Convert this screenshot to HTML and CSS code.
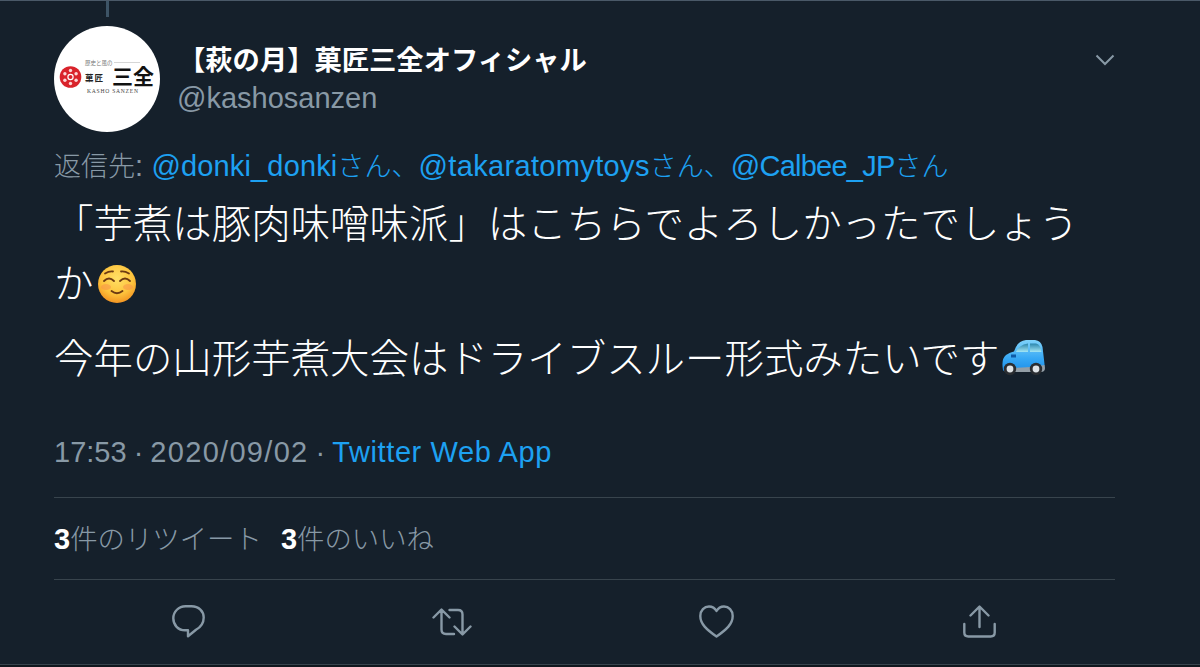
FILE: index.html
```html
<!DOCTYPE html>
<html lang="ja">
<head>
<meta charset="utf-8">
<title>Tweet</title>
<link rel="stylesheet" href="styles.css">
</head>
<body>
<main class="tweet">
  <div class="thread-stub"></div>
  <header class="head">
    <div class="avatar">
      <svg class="logo" viewBox="0 0 106 106" width="106" height="106">
        <circle cx="53" cy="53" r="53" fill="#fff"/>
        <text class="logo-top" x="31" y="38.500">歴史と風の</text>
        <line x1="60" y1="36.500" x2="86" y2="36.500" stroke="#c4c4c4" stroke-width=".7"/>
        <circle cx="16.500" cy="51" r="10.800" fill="#d9232b"/>
        <g fill="#fbd7d7">
          <circle cx="16.500" cy="44.500" r="1.700"/><circle cx="22.100" cy="47.700" r="1.700"/><circle cx="22.100" cy="54.300" r="1.700"/>
          <circle cx="16.500" cy="57.500" r="1.700"/><circle cx="10.900" cy="54.300" r="1.700"/><circle cx="10.900" cy="47.700" r="1.700"/>
        </g>
        <circle cx="16.500" cy="51" r="2.600" fill="none" stroke="#fff" stroke-width="1.200"/>
        <text class="logo-mid" x="31" y="55">菓匠</text>
        <text class="logo-big" x="58" y="58">三全</text>
        <text class="logo-en" x="33" y="67">KASHO SANZEN</text>
      </svg>
    </div>
    <div class="names">
      <div class="name">【萩の月】菓匠三全オフィシャル</div>
      <div class="handle">@kashosanzen</div>
    </div>
    <svg class="chevron" viewBox="0 0 20 12" width="20" height="12"><path d="M1.500 1.500 10 10l8.500-8.500" fill="none" stroke="#8899a6" stroke-width="2"/></svg>
  </header>
  <p class="reply"><span class="ja">返信先</span>: <span class="link">@donki_donki<span class="ja">さん、</span><span class="wide">@takaratomytoys</span><span class="ja">さん、</span><span class="tight">@Calbee_JP</span><span class="ja">さん</span></span></p>
  <p class="text first">「芋煮は豚肉味噌味派」はこちらでよろしかったでしょう<br>か<svg class="emoji smile" viewBox="0 0 40 40" width="40" height="40"><defs><radialGradient id="face" cx="50%" cy="35%" r="70%"><stop offset="0" stop-color="#ffe066"/><stop offset=".6" stop-color="#fdc33c"/><stop offset="1" stop-color="#f08a1d"/></radialGradient></defs><circle cx="20" cy="20" r="19" fill="url(#face)"/><ellipse cx="9" cy="23" rx="5" ry="3" fill="#f7924a" opacity=".55"/><ellipse cx="31" cy="23" rx="5" ry="3" fill="#f7924a" opacity=".55"/><path d="M7 17q5-5 10 0M23 17q5-5 10 0M8 9.500q4-2.500 8-2M24 7.500q4-.5 8 2M14.500 27q5.500 4.500 11 0" fill="none" stroke="#6d3a12" stroke-width="1.800" stroke-linecap="round"/></svg></p>
  <p class="text second">今年の山形芋煮大会はドライブスルー形式みたいです<svg class="emoji car" viewBox="0 0 44 38" width="44" height="38"><defs><linearGradient id="body" x1="0" y1="0" x2="0" y2="1"><stop offset="0" stop-color="#7fd2fa"/><stop offset=".6" stop-color="#36a8f5"/><stop offset="1" stop-color="#1f8fe8"/></linearGradient><linearGradient id="glass" x1="0" y1="0" x2="0" y2="1"><stop offset="0" stop-color="#2b86ad"/><stop offset="1" stop-color="#a2e6f5"/></linearGradient></defs><path d="M1 31q-2-11 3-15 4-3 8-3.500Q15 2 24 1h9q6 .5 7.500 7l2 17q.5 6-3.500 7H3q-2 0-2-1z" fill="url(#body)"/><path d="M14 13q2.500-7 12-8.500V13zM28 4.500h6q4.500.5 5.500 8.500H28z" fill="url(#glass)"/><path d="M9 15.500h5v3H9z" fill="#0e5ba8"/><path d="M2 28q20 2 40.500-2l.5 3q0 4-4 4H4q-2 0-2-3z" fill="#939ea6"/><circle cx="8" cy="30" r="6.200" fill="#2a2d31"/><circle cx="8" cy="30" r="3.400" fill="#dfe3e6"/><circle cx="34" cy="30" r="6.200" fill="#2a2d31"/><circle cx="34" cy="30" r="3.400" fill="#dfe3e6"/></svg></p>
  <p class="meta">17:53 · <span class="date">2020/09/02</span> · <span class="link source">Twitter Web App</span></p>
  <div class="stats">
    <span class="stat"><b>3</b>件のリツイート</span>
    <span class="stat"><b>3</b>件のいいね</span>
  </div>
  <nav class="actions">
    <svg class="icon" viewBox="0 0 33 33" width="33" height="33"><path d="M13.500 1.300h6C27 1.300 31.700 6.500 31.700 12.500c0 6-3.300 9.800-7.700 12.300l-8 6.500v-6h-3C6.200 25.300 1.300 20 1.300 13.300 1.300 6.500 6.800 1.300 13.500 1.300z" fill="none" stroke="#8899a6" stroke-width="2.400" stroke-linejoin="round"/></svg>
    <svg class="icon" viewBox="0 0 40 28" width="40" height="28"><path d="M1.500 9.500 9.500 1.500l8 8M9.500 2.500v19q0 4.500 4.500 4.500h8M17.500 2h8.500q4.500 0 4.500 4.500v19M22.500 18.500l8 8 8-8" fill="none" stroke="#8899a6" stroke-width="2.400" stroke-linecap="round" stroke-linejoin="round"/></svg>
    <svg class="icon" viewBox="0 0 35 33" width="35" height="33"><path d="M17.500 31.500C7.500 24.500 1.300 19 1.300 11 1.300 5.500 5.300 1.500 10 1.500 13.200 1.500 16 3.300 17.500 6 19 3.300 21.800 1.500 25 1.500 29.700 1.500 33.700 5.500 33.700 11 33.700 19 27.500 24.500 17.500 31.500z" fill="none" stroke="#8899a6" stroke-width="2.400" stroke-linejoin="round"/></svg>
    <svg class="icon share" viewBox="0 0 33 33" width="33" height="33"><path d="M16.500 22V1.800M7.500 10.500l9-9 9 9M1.300 19v8.500q0 4 4 4h22.400q4 0 4-4V19" fill="none" stroke="#8899a6" stroke-width="2.400" stroke-linecap="round" stroke-linejoin="round"/></svg>
  </nav>
</main>
</body>
</html>
```
FILE: styles.css
```css
* { box-sizing: border-box; }
html, body { margin: 0; padding: 0; background: #10171e; }
body { width: 1200px; height: 667px; overflow: hidden; font-family: "Liberation Sans", "Noto Sans CJK JP", sans-serif; color: #fff; }
p { margin: 0; }
.tweet { width: 1200px; height: 665px; padding: 0 85px 0 54px; background: #15202b; border-top: 1px solid #4a5968; border-bottom: 1px solid #38444d; display: flex; flex-direction: column; }
.thread-stub { width: 3px; height: 16px; margin-left: 52px; background: #3d5466; flex: none; }
.head { display: flex; margin-top: 9px; height: 106px; flex: none; }
.avatar { width: 106px; height: 106px; flex: none; }
.logo { display: block; font-family: "Noto Sans CJK JP", sans-serif; }
.logo-top { font-size: 5.500px; fill: #777; }
.logo-mid { font-size: 8.500px; font-weight: 700; letter-spacing: 1px; fill: #222; }
.logo-big { font-size: 21px; font-weight: 700; fill: #111; }
.logo-en { font-family: "Liberation Serif", serif; font-size: 5.600px; letter-spacing: .75px; fill: #444; }
.names { margin-left: 17px; padding-top: 17px; flex: 1; }
.name { font-size: 27.300px; line-height: 36px; font-weight: 700; margin-left: 1px; }
.handle { font-size: 29px; line-height: 36px; color: #8899a6; margin-top: 1px; }
.chevron { margin-top: 28px; flex: none; }
.reply { font-size: 29px; line-height: 36px; color: #8899a6; margin-top: 16px; letter-spacing: .15px; }
.ja { font-size: 27px; letter-spacing: 0; font-weight: 300; }
.wide { letter-spacing: .35px; }
.tight { letter-spacing: -.75px; }
.link { color: #1da1f2; }
.text { font-size: 39.450px; line-height: 60px; font-weight: 300; }
.first { margin-top: 9px; }
.second { margin-top: 15px; }
.emoji { display: inline-block; vertical-align: -6px; }
.smile { margin-left: 4px; }
.car { margin-left: 3px; vertical-align: -4px; }
.meta { font-size: 29px; line-height: 36px; word-spacing: -1px; color: #8899a6; margin-top: 45px; }
.date { letter-spacing: 1.300px; }
.source { letter-spacing: .6px; word-spacing: 0; }
.stats { margin-top: 27px; height: 83px; padding-bottom: 3px; border-top: 1px solid #38444d; border-bottom: 1px solid #38444d; display: flex; align-items: center; gap: 19px; font-size: 27.400px; color: #8899a6; font-weight: 300; }
.stats b { color: #fff; font-size: 29px; font-weight: 700; }
.actions { display: flex; gap: 227px; align-items: center; padding-left: 118px; flex: 1; padding-bottom: 1px; }
.icon { display: block; flex: none; }
.share { margin-left: 2px; }
```
